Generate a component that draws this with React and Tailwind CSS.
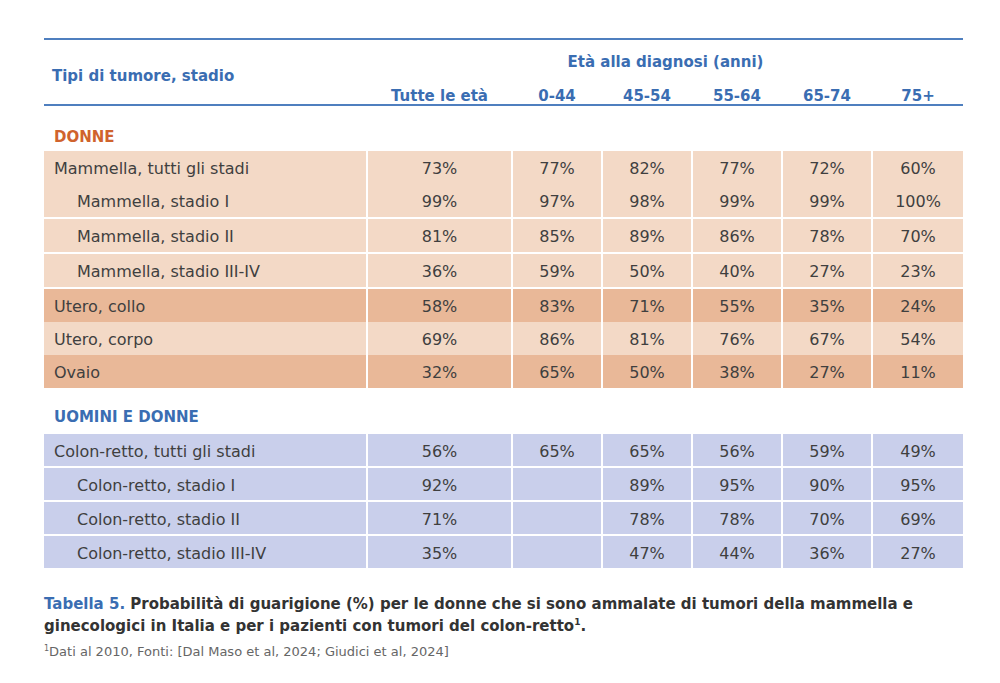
const cols = "grid grid-cols-[322px_143px_88px_88px_88px_88px_90px] gap-x-[2px]";

const donne = [
  { name: "Mammella, tutti gli stadi", v: ["73%", "77%", "82%", "77%", "72%", "60%"], bg: "bg-[#f3d9c6]", sep: true },
  { name: "Mammella, stadio I", v: ["99%", "97%", "98%", "99%", "99%", "100%"], bg: "bg-[#f3d9c6]", sub: true },
  { name: "Mammella, stadio II", v: ["81%", "85%", "89%", "86%", "78%", "70%"], bg: "bg-[#f3d9c6]", sub: true, sep: true },
  { name: "Mammella, stadio III-IV", v: ["36%", "59%", "50%", "40%", "27%", "23%"], bg: "bg-[#f3d9c6]", sub: true, sep: true },
  { name: "Utero, collo", v: ["58%", "83%", "71%", "55%", "35%", "24%"], bg: "bg-[#e9b898]", sep: true },
  { name: "Utero, corpo", v: ["69%", "86%", "81%", "76%", "67%", "54%"], bg: "bg-[#f3d9c6]" },
  { name: "Ovaio", v: ["32%", "65%", "50%", "38%", "27%", "11%"], bg: "bg-[#e9b898]" },
];

const colon = [
  { name: "Colon-retto, tutti gli stadi", v: ["56%", "65%", "65%", "56%", "59%", "49%"], sep: true },
  { name: "Colon-retto, stadio I", v: ["92%", "", "89%", "95%", "90%", "95%"], sub: true, sep: true },
  { name: "Colon-retto, stadio II", v: ["71%", "", "78%", "78%", "70%", "69%"], sub: true, sep: true },
  { name: "Colon-retto, stadio III-IV", v: ["35%", "", "47%", "44%", "36%", "27%"], sub: true, sep: true },
];

function Row({ r, bg, h, first }) {
  return (
    <div className={`${cols} ${r.sep && !first ? "mt-[2px]" : ""}`}>
      <div className={`${bg} ${h} flex items-center pt-[3px] ${r.sub ? "pl-[33px]" : "pl-[10px]"}`}>{r.name}</div>
      {r.v.map((x, i) => (
        <div key={i} className={`${bg} ${h} flex items-center justify-center pt-[3px]`}>{x}</div>
      ))}
    </div>
  );
}

export default function App() {
  return (
    <main className="w-[1000px] h-[683px] bg-white pt-[38px] pl-[44px] text-[#3f3f3f] font-['DejaVu_Sans',sans-serif] text-[16px] leading-none">
      <div className="w-[919px]">
        <section className="border-t-2 border-b-2 border-[#4f7fbf] h-[68px] flex text-[#3a6db2] font-semibold text-[15px]">
          <div className="w-[324px] flex items-center pl-[8px] pt-[8px]">Tipi di tumore, stadio</div>
          <div className="flex-1 flex flex-col">
            <div className="h-[42px] flex items-center justify-center pt-[2px]">Età alla diagnosi (anni)</div>
            <div className="grid grid-cols-[143px_88px_88px_88px_88px_90px] gap-x-[2px] pt-[7px]">
              <div className="text-center">Tutte le età</div>
              <div className="text-center">0-44</div>
              <div className="text-center">45-54</div>
              <div className="text-center">55-64</div>
              <div className="text-center">65-74</div>
              <div className="text-center">75+</div>
            </div>
          </div>
        </section>

        <h2 className="h-[45px] flex items-center pl-[10px] pt-[18px] text-[#d0632d] font-semibold text-[15px]">DONNE</h2>
        <div>
          {donne.map((r, i) => (
            <Row key={i} r={r} bg={r.bg} h="h-[33px]" first={i === 0} />
          ))}
        </div>

        <h2 className="h-[46px] flex items-center pl-[10px] pt-[12px] text-[#3a6db2] font-semibold text-[15px]">UOMINI E DONNE</h2>
        <div>
          {colon.map((r, i) => (
            <Row key={i} r={r} bg="bg-[#c9cfeb]" h="h-[32px]" first={i === 0} />
          ))}
        </div>

        <p className="mt-[25px] font-bold text-[15px] leading-[22px] text-[#333] whitespace-nowrap">
          <span className="text-[#3a6db2]">Tabella 5.</span> Probabilità di guarigione (%) per le donne che si sono ammalate di tumori della mammella e
          <br />
          ginecologici in Italia e per i pazienti con tumori del colon-retto<span className="text-[9px] align-top leading-[14px]">1</span>.
        </p>
        <p className="mt-[7px] text-[13px] leading-[16px] text-[#666]">
          <span className="text-[8px] align-top leading-[10px]">1</span>Dati al 2010, Fonti: [Dal Maso et al, 2024; Giudici et al, 2024]
        </p>
      </div>
    </main>
  );
}
